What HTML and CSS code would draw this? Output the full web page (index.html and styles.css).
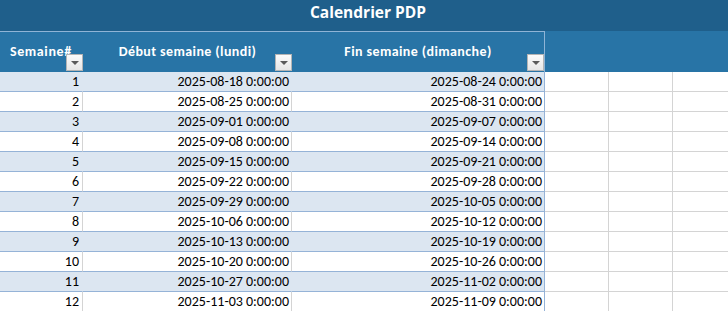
FILE: index.html
```html
<!DOCTYPE html>
<html lang="fr">
<head>
<meta charset="utf-8">
<title>Calendrier PDP</title>
<link rel="stylesheet" href="styles.css">
</head>
<body>
<div class="title">Calendrier PDP</div>
<div class="sheet">
  <div class="row head">
    <div class="c a">Semaine#<span class="filt"></span></div>
    <div class="c b">Début semaine (lundi)<span class="filt"></span></div>
    <div class="c cc">Fin semaine (dimanche)<span class="filt"></span></div>
    <div class="c d"></div>
    <div class="c e"></div>
    <div class="c f"></div>
  </div>
  <div class="row odd"><div class="c a">1</div><div class="c b">2025-08-18 0:00:00</div><div class="c cc">2025-08-24 0:00:00</div><div class="c d"></div><div class="c e"></div><div class="c f"></div></div>
  <div class="row"><div class="c a">2</div><div class="c b">2025-08-25 0:00:00</div><div class="c cc">2025-08-31 0:00:00</div><div class="c d"></div><div class="c e"></div><div class="c f"></div></div>
  <div class="row odd"><div class="c a">3</div><div class="c b">2025-09-01 0:00:00</div><div class="c cc">2025-09-07 0:00:00</div><div class="c d"></div><div class="c e"></div><div class="c f"></div></div>
  <div class="row"><div class="c a">4</div><div class="c b">2025-09-08 0:00:00</div><div class="c cc">2025-09-14 0:00:00</div><div class="c d"></div><div class="c e"></div><div class="c f"></div></div>
  <div class="row odd"><div class="c a">5</div><div class="c b">2025-09-15 0:00:00</div><div class="c cc">2025-09-21 0:00:00</div><div class="c d"></div><div class="c e"></div><div class="c f"></div></div>
  <div class="row"><div class="c a">6</div><div class="c b">2025-09-22 0:00:00</div><div class="c cc">2025-09-28 0:00:00</div><div class="c d"></div><div class="c e"></div><div class="c f"></div></div>
  <div class="row odd"><div class="c a">7</div><div class="c b">2025-09-29 0:00:00</div><div class="c cc">2025-10-05 0:00:00</div><div class="c d"></div><div class="c e"></div><div class="c f"></div></div>
  <div class="row"><div class="c a">8</div><div class="c b">2025-10-06 0:00:00</div><div class="c cc">2025-10-12 0:00:00</div><div class="c d"></div><div class="c e"></div><div class="c f"></div></div>
  <div class="row odd"><div class="c a">9</div><div class="c b">2025-10-13 0:00:00</div><div class="c cc">2025-10-19 0:00:00</div><div class="c d"></div><div class="c e"></div><div class="c f"></div></div>
  <div class="row"><div class="c a">10</div><div class="c b">2025-10-20 0:00:00</div><div class="c cc">2025-10-26 0:00:00</div><div class="c d"></div><div class="c e"></div><div class="c f"></div></div>
  <div class="row odd"><div class="c a">11</div><div class="c b">2025-10-27 0:00:00</div><div class="c cc">2025-11-02 0:00:00</div><div class="c d"></div><div class="c e"></div><div class="c f"></div></div>
  <div class="row"><div class="c a">12</div><div class="c b">2025-11-03 0:00:00</div><div class="c cc">2025-11-09 0:00:00</div><div class="c d"></div><div class="c e"></div><div class="c f"></div></div>
</div>
</body>
</html>
```
FILE: styles.css
```css
html, body {
  margin: 0;
  padding: 0;
  background: #ffffff;
  overflow: hidden;
}
body {
  font-family: "Carlito", "Lato", "Liberation Sans", sans-serif;
  font-size: 14px;
  color: #000;
}
.title {
  height: 31px;
  box-sizing: border-box;
  background: #1f5f8b;
  color: #fff;
  font-family: "Open Sans", "Lato", sans-serif;
  font-weight: bold;
  font-size: 15.5px;
  text-align: center;
  line-height: 25px;
  padding-left: 8px;
}
.sheet {
  display: flex;
  flex-direction: column;
}
.row {
  display: grid;
  grid-template-columns: 83px 209px 253px 64px 64px 1fr;
  height: 20px;
}
.c {
  box-sizing: border-box;
  border-right: 1px solid #d4d4d4;
  border-bottom: 1px solid #d4d4d4;
  text-align: right;
  padding-right: 3px;
  line-height: 19px;
  white-space: nowrap;
  overflow: hidden;
}
.c.b, .c.cc { padding-right: 2px; }
.c.a, .c.b, .c.cc { border-bottom-color: #95b3d7; }
.c.cc { border-right-color: #95b3d7; }
.c.f { border-right: none; }
.odd .c.a, .odd .c.b, .odd .c.cc { background: #dce6f1; }
.odd .c.a, .odd .c.b { border-right-color: transparent; }

.row.head {
  height: 41px;
  background: #2874a6;
}
.head .c {
  position: relative;
  border: none;
  color: #fff;
  font-weight: bold;
  letter-spacing: 0.4px;
  text-align: center;
  padding: 0;
  line-height: 40px;
  overflow: visible;
}
.head .c.a, .head .c.b, .head .c.cc {
  border-top: 1px solid #8fb4d6;
}
.head .c.cc { border-right: 1px solid #8fb4d6; }
.head .c.a { padding-left: 10px; text-align: left; letter-spacing: 0.6px; }
.filt {
  position: absolute;
  right: 0;
  bottom: 1px;
  width: 17px;
  height: 17px;
  box-sizing: border-box;
  border: 1px solid #b4b4b4;
  background: linear-gradient(#fbfbfb, #e6e6e6);
  display: flex;
  align-items: center;
  justify-content: center;
}
.filt::after {
  content: "";
  width: 0;
  height: 0;
  border-left: 4px solid transparent;
  border-right: 4px solid transparent;
  border-top: 4px solid #5a5a5a;
  margin-top: 1px;
}
```
